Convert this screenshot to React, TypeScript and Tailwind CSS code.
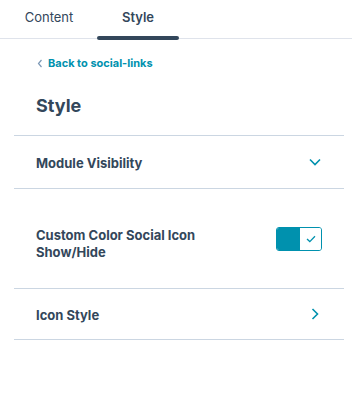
import React from 'react';

const ChevronLeft = () => (
  <svg width="6" height="9" viewBox="0 0 6 9" fill="none" stroke="#7c98b6" strokeWidth="1.2">
    <path d="M4.5 1 L1.5 4.5 L4.5 8" />
  </svg>
);

const ChevronDown = () => (
  <svg width="12" height="8" viewBox="0 0 12 8" fill="none" stroke="#0091ae" strokeWidth="1.6">
    <path d="M1 1.5 L6 6.5 L11 1.5" />
  </svg>
);

const ChevronRight = () => (
  <svg width="8" height="12" viewBox="0 0 8 12" fill="none" stroke="#0091ae" strokeWidth="1.6">
    <path d="M1.5 1 L6.5 6 L1.5 11" />
  </svg>
);

const App: React.FC = () => {
  return (
    <div className="w-[352px] h-[416px] bg-white text-[#33475b]" style={{ fontFamily: 'Inter, "Noto Sans", sans-serif' }}>
      {/* Tabs */}
      <div className="flex pl-2 gap-[7px] border-b border-[#dfe3eb] h-[39px]">
        <div className="w-[82px] flex items-center justify-center text-[13px] text-[#33475b] pb-[3px]">Content</div>
        <div className="relative w-[82px] flex items-center justify-center text-[13px] font-semibold pb-[3px]">
          Style
          <div className="absolute left-0 right-0 bottom-[-2px] h-[4px] rounded-full bg-[#33475b]" />
        </div>
      </div>

      {/* Back link */}
      <div className="flex items-center gap-[5px] pl-[37px] mt-[17px] h-[14px]">
        <ChevronLeft />
        <span className="text-[11px] font-bold text-[#0091ae]">Back to social-links</span>
      </div>

      <h1 className="pl-9 mt-[24px] text-[18px] font-bold leading-[24px]">Style</h1>

      <div className="ml-[14px] mr-[8px] mt-[17px] border-t border-[#cbd6e2]">
        {/* Module Visibility */}
        <div className="flex items-center justify-between h-[53px] pl-[22px] pr-[23px] border-b border-[#cbd6e2]">
          <span className="text-[13px] font-bold pt-[3px]">Module Visibility</span>
          <ChevronDown />
        </div>

        {/* Toggle row */}
        <div className="flex items-start justify-between h-[100px] pl-[22px] pr-[22px] pt-[38px] border-b border-[#cbd6e2]">
          <span className="text-[13px] font-bold leading-[17px] w-[170px]">Custom Color Social Icon Show/Hide</span>
          <div className="flex w-[46px] h-[24px] rounded-[3px] border border-[#0091ae] overflow-hidden">
            <div className="w-[23px] h-full bg-[#0091ae]" />
            <div className="flex-1 flex items-center justify-center bg-white">
              <svg width="10" height="8" viewBox="0 0 10 8" fill="none" stroke="#0091ae" strokeWidth="1.3">
                <path d="M1 4 L3.8 6.6 L9 1.2" />
              </svg>
            </div>
          </div>
        </div>

        {/* Icon Style */}
        <div className="flex items-center justify-between h-[51px] pl-[22px] pr-[25px] border-b border-[#cbd6e2]">
          <span className="text-[13px] font-bold pt-[3px]">Icon Style</span>
          <ChevronRight />
        </div>
      </div>
    </div>
  );
};

export default App;
